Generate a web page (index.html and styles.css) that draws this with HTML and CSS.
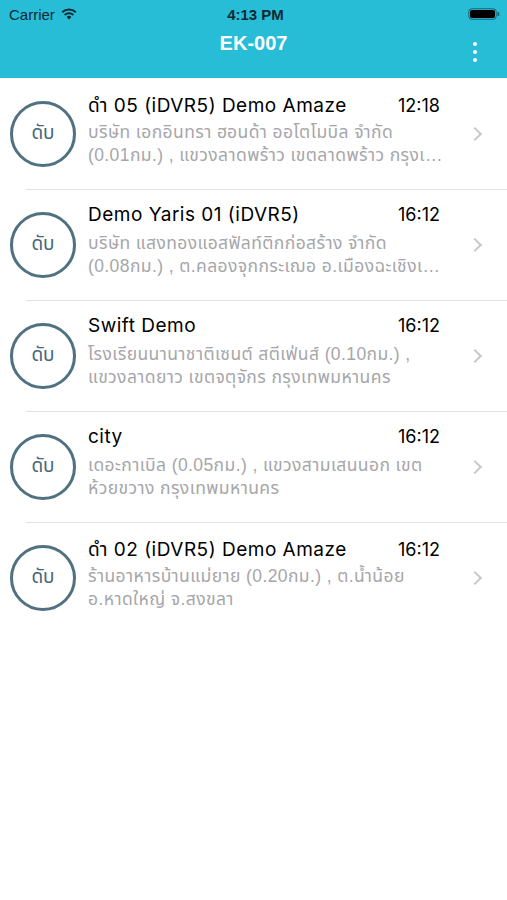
FILE: index.html
```html
<!DOCTYPE html>
<html lang="th">
<head>
<meta charset="utf-8">
<title>EK-007</title>
<link rel="stylesheet" href="styles.css">
</head>
<body>
<header class="topbar">
  <div class="status">
    <div class="status-left">
      <span class="carrier">Carrier</span>
      <svg class="wifi" width="16" height="12" viewBox="0 0 16 12">
        <path d="M8 11.5 L5.6 8.9 A3.6 3.6 0 0 1 10.4 8.9 Z" fill="#0d2a33"/>
        <path d="M3.7 6.9 A6.3 6.3 0 0 1 12.3 6.9" fill="none" stroke="#0d2a33" stroke-width="2"/>
        <path d="M1.2 4.2 A10 10 0 0 1 14.8 4.2" fill="none" stroke="#0d2a33" stroke-width="2"/>
      </svg>
    </div>
    <span class="clock">4:13 PM</span>
    <div class="status-right">
      <svg class="battery" width="32" height="12" viewBox="0 0 32 12">
        <rect x="0.75" y="0.75" width="27.5" height="10.5" rx="3" fill="none" stroke="#0d2a33" stroke-width="1" opacity="0.6"/>
        <rect x="2" y="2" width="25" height="8" rx="1.8" fill="#000"/>
        <path d="M29.5 4 h0.8 a1 1 0 0 1 1 1 v2 a1 1 0 0 1 -1 1 h-0.8 z" fill="#0d2a33" opacity="0.6"/>
      </svg>
    </div>
  </div>
  <div class="navbar">
    <h1 class="nav-title">EK-007</h1>
    <div class="menu" aria-label="menu">
      <span class="dot"></span><span class="dot"></span><span class="dot"></span>
    </div>
  </div>
</header>

<ul class="list">
  <li class="row">
    <div class="badge">ดับ</div>
    <div class="content">
      <div class="title-line">
        <span class="title">ดำ 05 (iDVR5) Demo Amaze</span>
        <span class="time">12:18</span>
      </div>
      <p class="desc">
        <span class="line">บริษัท เอกอินทรา ฮอนด้า ออโตโมบิล จำกัด</span>
        <span class="line">(0.01กม.) , แขวงลาดพร้าว เขตลาดพร้าว กรุงเทพมหานคร</span>
      </p>
    </div>
    <span class="chev"></span>
  </li>
  <li class="row">
    <div class="badge">ดับ</div>
    <div class="content">
      <div class="title-line">
        <span class="title">Demo Yaris 01 (iDVR5)</span>
        <span class="time">16:12</span>
      </div>
      <p class="desc">
        <span class="line">บริษัท แสงทองแอสฟัลท์ติกก่อสร้าง จำกัด</span>
        <span class="line">(0.08กม.) , ต.คลองจุกกระเฌอ อ.เมืองฉะเชิงเทรา จ.ฉะเชิงเทรา</span>
      </p>
    </div>
    <span class="chev"></span>
  </li>
  <li class="row">
    <div class="badge">ดับ</div>
    <div class="content">
      <div class="title-line">
        <span class="title">Swift Demo</span>
        <span class="time">16:12</span>
      </div>
      <p class="desc">
        <span class="line">โรงเรียนนานาชาติเซนต์ สตีเฟ่นส์ (0.10กม.) ,</span>
        <span class="line">แขวงลาดยาว เขตจตุจักร กรุงเทพมหานคร</span>
      </p>
    </div>
    <span class="chev"></span>
  </li>
  <li class="row">
    <div class="badge">ดับ</div>
    <div class="content">
      <div class="title-line">
        <span class="title">city</span>
        <span class="time">16:12</span>
      </div>
      <p class="desc">
        <span class="line">เดอะกาเบิล (0.05กม.) , แขวงสามเสนนอก เขต</span>
        <span class="line">ห้วยขวาง กรุงเทพมหานคร</span>
      </p>
    </div>
    <span class="chev"></span>
  </li>
  <li class="row">
    <div class="badge">ดับ</div>
    <div class="content">
      <div class="title-line">
        <span class="title">ดำ 02 (iDVR5) Demo Amaze</span>
        <span class="time">16:12</span>
      </div>
      <p class="desc">
        <span class="line">ร้านอาหารบ้านแม่ยาย (0.20กม.) , ต.น้ำน้อย</span>
        <span class="line">อ.หาดใหญ่ จ.สงขลา</span>
      </p>
    </div>
    <span class="chev"></span>
  </li>
</ul>
</body>
</html>
```
FILE: styles.css
```css
* { box-sizing: border-box; }
html, body {
  margin: 0;
  padding: 0;
  background: #ffffff;
  font-family: "Liberation Sans", "Noto Sans", "Noto Sans Thai", sans-serif;
  color: #000;
}
.topbar {
  background: #27bdd7;
  height: 78px;
  display: flex;
  flex-direction: column;
}
.status {
  height: 28px;
  display: grid;
  grid-template-columns: 1fr auto 1fr;
  align-items: center;
  padding: 0 7px 0 9px;
  color: #0d2a33;
  font-size: 15px;
}
.status-left {
  display: flex;
  align-items: center;
  gap: 6px;
}
.wifi { margin-top: -1px; }
.clock {
  font-weight: bold;
  font-size: 15px;
  padding-left: 2px;
}
.status-right {
  display: flex;
  justify-content: flex-end;
}
.navbar {
  flex: 1;
  display: flex;
  align-items: flex-start;
  justify-content: center;
  position: relative;
}
.nav-title {
  margin: 4px 0 0;
  color: #ffffff;
  font-size: 20px;
  font-weight: bold;
}
.menu {
  position: absolute;
  right: 30px;
  top: 14px;
  display: flex;
  flex-direction: column;
  gap: 4px;
}
.dot {
  width: 4px;
  height: 4px;
  border-radius: 50%;
  background: #ffffff;
}
.list {
  list-style: none;
  margin: 0;
  padding: 0;
}
.row {
  height: 111px;
  display: flex;
  align-items: center;
  padding-left: 10px;
  position: relative;
}
.row + .row::before {
  content: "";
  position: absolute;
  left: 26px;
  right: 0;
  top: 0;
  height: 1px;
  background: #e3e3e6;
}
.badge {
  width: 66px;
  height: 66px;
  flex: 0 0 66px;
  border: 3.5px solid #4f7180;
  border-radius: 50%;
  display: flex;
  align-items: center;
  justify-content: center;
  color: #466776;
  font-size: 19px;
  padding-bottom: 1px;
}
.content {
  flex: 1;
  min-width: 0;
  margin-left: 12px;
  align-self: flex-start;
  padding-top: 14px;
}
.title-line {
  display: flex;
  justify-content: space-between;
  align-items: baseline;
  width: 352px;
  height: 27px;
}
.title {
  font-family: Inter, "Liberation Sans", "Noto Sans Thai", sans-serif;
  font-size: 19px;
  letter-spacing: 0.5px;
  color: #000;
}
.time {
  font-family: Inter, "Liberation Sans", sans-serif;
  font-size: 18px;
  color: #000;
  font-weight: 400;
}
.desc {
  margin: 2px 0 0;
  width: 360px;
  font-size: 17.5px;
  line-height: 23px;
  color: #a6a6aa;
  display: flex;
  flex-direction: column;
}
.line {
  white-space: nowrap;
  overflow: hidden;
  text-overflow: ellipsis;
  letter-spacing: 0.4px;
}
.chev {
  width: 10px;
  height: 10px;
  border-top: 2px solid #c7c7cc;
  border-right: 2px solid #c7c7cc;
  transform: rotate(45deg);
  margin: 0 27px 0 4px;
  flex: 0 0 10px;
}
```
